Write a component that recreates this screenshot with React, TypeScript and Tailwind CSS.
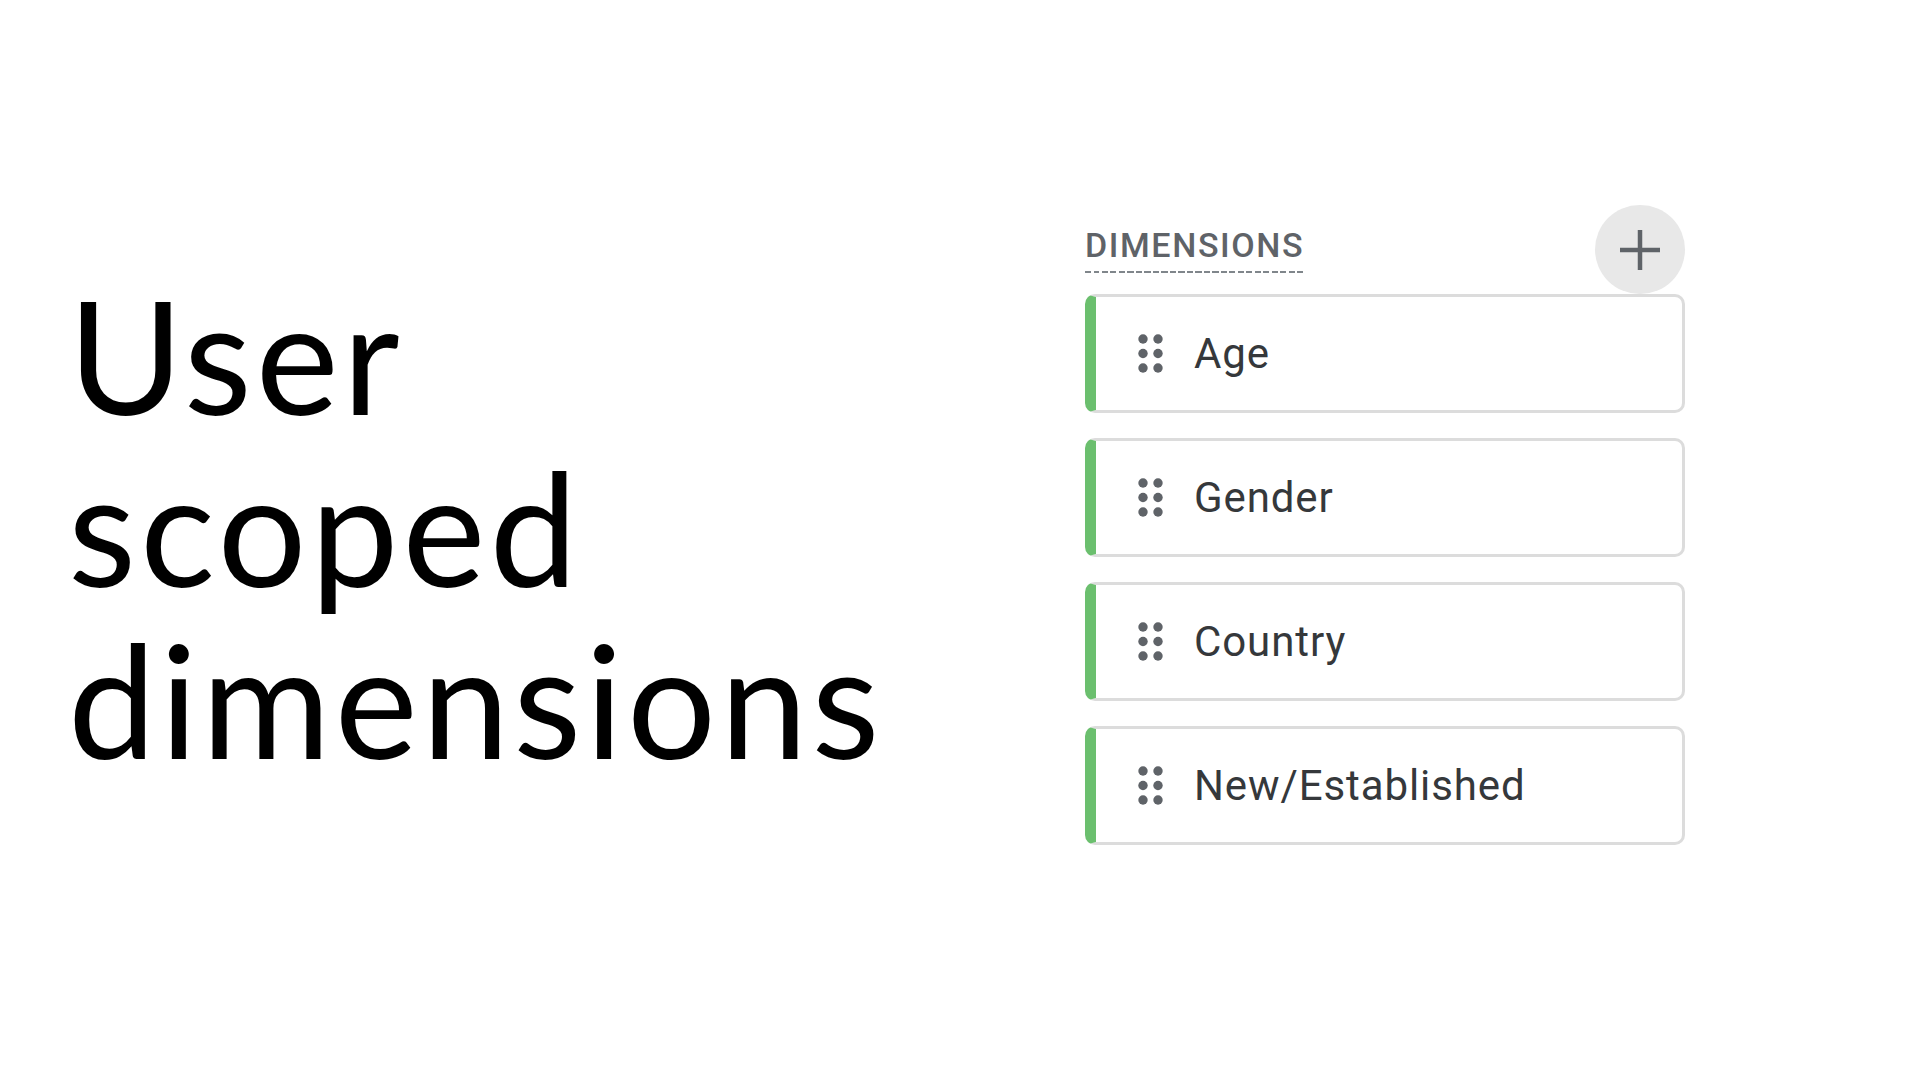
const DIMENSIONS = ['Age', 'Gender', 'Country', 'New/Established'];

function DragHandle() {
  return (
    <svg width="26" height="40" viewBox="0 0 26 40" className="shrink-0">
      {[5, 19.5, 34].map((cy) => (
        <g key={cy} fill="#5f6368">
          <circle cx="5" cy={cy} r="4.7" />
          <circle cx="20" cy={cy} r="4.7" />
        </g>
      ))}
    </svg>
  );
}

function PlusIcon() {
  return (
    <svg width="40" height="40" viewBox="0 0 40 40">
      <rect x="17.75" y="0" width="4.5" height="40" fill="#5f6368" />
      <rect x="0" y="17.75" width="40" height="4.5" fill="#5f6368" />
    </svg>
  );
}

function DimensionCard({ label }: { label: string }) {
  return (
    <div className="flex h-[119px] items-center rounded-[10px] border-[3px] border-l-[11px] border-[#dcdcdc] border-l-[#6bbf6e] bg-white pl-[42px]">
      <DragHandle />
      <span className="ml-[30px] font-['Roboto',sans-serif] text-[42px] leading-none tracking-[0.9px] text-[#35383b]">
        {label}
      </span>
    </div>
  );
}

export default function App() {
  return (
    <div className="flex h-[1080px] w-[1920px] items-center bg-white pb-[30px]">
      {/* Slide title */}
      <div className="w-[1085px] shrink-0 pl-[68px] pt-[2px]">
        <h1 className="font-['Lato',sans-serif] text-[157px] font-normal leading-[172px] tracking-[4px] text-black">
          User
          <br />
          scoped
          <br />
          dimensions
        </h1>
      </div>

      {/* Dimensions panel */}
      <div className="w-[600px] shrink-0">
        <div className="flex h-[89px] items-end justify-between">
          <div className="pb-[21px]">
            <div className="font-['Roboto',sans-serif] text-[34px] font-medium leading-[34px] tracking-[1.6px] text-[#5f6368]">
              DIMENSIONS
            </div>
            <div className="mt-[9px] h-[2px] bg-[repeating-linear-gradient(90deg,#80868b_0,#80868b_6px,transparent_6px,transparent_8.5px)]" />
          </div>
          <div className="flex h-[89px] w-[90px] items-center justify-center rounded-full bg-[#e8e8e8]">
            <PlusIcon />
          </div>
        </div>
        <div className="flex flex-col gap-[25px]">
          {DIMENSIONS.map((d) => (
            <DimensionCard key={d} label={d} />
          ))}
        </div>
      </div>
    </div>
  );
}
